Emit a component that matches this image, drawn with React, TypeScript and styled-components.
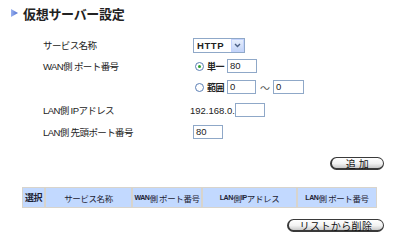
import React from 'react';
import styled, { createGlobalStyle } from 'styled-components';

const GlobalStyle = createGlobalStyle`
    html, body {
        margin: 0;
        padding: 0;
        background: #ffffff;
    }
    body {
        font-family: 'Liberation Sans', 'Noto Sans CJK JP', sans-serif;
        color: #222222;
    }
`;

const Page = styled.div`
    width: 400px;
    height: 249px;
    overflow: hidden;
    display: flex;
    flex-direction: column;
`;

const Title = styled.div`
    height: 26px;
    padding-left: 11px;
    display: flex;
    align-items: center;
    gap: 5px;
    font-family: 'Noto Sans CJK JP', sans-serif;
    font-weight: 700;
    font-size: 13px;
    letter-spacing: -0.3px;
    color: #222;
`;

const Form = styled.div`
    margin-top: 8px;
    padding-left: 43px;
    display: flex;
    flex-direction: column;
`;

const Row = styled.div<{ $h: number }>`
    height: ${({ $h }) => $h}px;
    display: grid;
    grid-template-columns: 147px 1fr;
    align-items: center;
`;

const Label = styled.span`
    font-family: 'Liberation Sans', 'Noto Sans CJK JP', sans-serif;
    font-size: 9.5px;
    letter-spacing: -0.6px;
    white-space: nowrap;
`;

const Value = styled.div<{ $indent?: number }>`
    display: flex;
    align-items: center;
    padding-left: ${({ $indent }) => $indent ?? 0}px;
    font-size: 9.5px;
    white-space: nowrap;
`;

const Input = styled.div<{ $w: number }>`
    width: ${({ $w }) => $w}px;
    height: 14px;
    box-sizing: border-box;
    border: 1px solid #8fa8c8;
    background: #fff;
    font-size: 9.5px;
    line-height: 12px;
    padding-left: 2px;
`;

const Select = styled.div`
    width: 52px;
    height: 15px;
    margin-left: 3px;
    box-sizing: border-box;
    border: 1px solid #8fa8c8;
    background: #fff;
    display: flex;
    align-items: center;
    justify-content: space-between;
    font-size: 9.5px;
    font-weight: 700;
    letter-spacing: 0.6px;
    padding-left: 3px;
`;

const SelectArrow = styled.div`
    width: 13px;
    height: 13px;
    box-sizing: border-box;
    border: 1px solid #c3d3fd;
    background: linear-gradient(#e6eefc, #c4d5f7);
    display: flex;
    align-items: center;
    justify-content: center;
`;

const Radio = styled.span<{ $checked?: boolean }>`
    width: 9px;
    height: 9px;
    box-sizing: border-box;
    border: 1px solid #5b7fb5;
    border-radius: 50%;
    background: #fff;
    margin: 0 3px 0 5px;
    display: inline-flex;
    align-items: center;
    justify-content: center;
    &::after {
        content: '';
        width: 3px;
        height: 3px;
        border-radius: 50%;
        background: ${({ $checked }) => ($checked ? '#2ea12e' : 'transparent')};
    }
`;

const RadioText = styled.span`
    font-family: 'Noto Sans CJK JP', sans-serif;
    font-size: 9px;
    font-weight: 700;
    letter-spacing: -0.5px;
    margin-right: 3px;
`;

const Tilde = styled.span`
    margin: 0 3px 0 4px;
    font-size: 10px;
    color: #555;
`;

const ButtonRow = styled.div<{ $mt: number }>`
    margin-top: ${({ $mt }) => $mt}px;
    display: flex;
    justify-content: flex-end;
    padding-right: 16px;
`;

const PillButton = styled.div<{ $w: number }>`
    width: ${({ $w }) => $w}px;
    height: 13px;
    box-sizing: border-box;
    border: 1px solid #3a3a3a;
    border-left-width: 2px;
    border-bottom-width: 2px;
    border-radius: 7px;
    background: linear-gradient(#ffffff 0%, #f2f2f2 55%, #c9c9c9 100%);
    display: flex;
    align-items: center;
    justify-content: center;
    font-family: 'Noto Sans CJK JP', sans-serif;
    font-size: 10px;
    letter-spacing: 0.4px;
    color: #111;
`;

const Table = styled.div`
    margin: 17px 0 0 22px;
    width: 355px;
    height: 21px;
    box-sizing: border-box;
    padding: 1px;
    display: grid;
    grid-template-columns: 21px 85px 68px 93px 78px;
    gap: 2px;
    background: #d8d4cc;
`;

const HeadCell = styled.div<{ $strong?: boolean }>`
    background: #c2d9ff;
    display: flex;
    align-items: center;
    justify-content: center;
    font-family: 'Noto Sans CJK JP', sans-serif;
    font-size: ${({ $strong }) => ($strong ? 9 : 8.5)}px;
    font-weight: ${({ $strong }) => ($strong ? 700 : 400)};
    letter-spacing: -0.4px;
    color: #1c2233;
    white-space: nowrap;
`;

const Small = styled.span`
    font-size: 7px;
    font-family: 'Liberation Sans', sans-serif;
    font-weight: 700;
`;

const Bullet = () => (
    <svg width="7" height="8" viewBox="0 0 7 8">
        <defs>
            <linearGradient id="bl" x1="0" y1="0" x2="1" y2="0">
                <stop offset="0" stopColor="#9ab2f0" />
                <stop offset="1" stopColor="#4f6fcf" />
            </linearGradient>
        </defs>
        <polygon points="0,0 7,4 0,8" fill="url(#bl)" />
    </svg>
);

const Chevron = () => (
    <svg width="7" height="5" viewBox="0 0 7 5">
        <polyline points="1,1 3.5,3.5 6,1" fill="none" stroke="#4d6185" strokeWidth="1.4" />
    </svg>
);

export default function App() {
    return (
        <Page>
            <GlobalStyle />
            <Title>
                <Bullet />
                仮想サーバー設定
            </Title>
            <Form>
                <Row $h={22}>
                    <Label>サービス名称</Label>
                    <Value>
                        <Select>
                            HTTP
                            <SelectArrow>
                                <Chevron />
                            </SelectArrow>
                        </Select>
                    </Value>
                </Row>
                <Row $h={20}>
                    <Label>WAN側 ポート番号</Label>
                    <Value>
                        <Radio $checked />
                        <RadioText>単一</RadioText>
                        <Input $w={30}>80</Input>
                    </Value>
                </Row>
                <Row $h={22}>
                    <span />
                    <Value>
                        <Radio />
                        <RadioText>範囲</RadioText>
                        <Input $w={29}>0</Input>
                        <Tilde>～</Tilde>
                        <Input $w={31}>0</Input>
                    </Value>
                </Row>
                <Row $h={24}>
                    <Label>LAN側 IPアドレス</Label>
                    <Value>
                        192.168.0.
                        <Input $w={30} />
                    </Value>
                </Row>
                <Row $h={19}>
                    <Label>LAN側 先頭ポート番号</Label>
                    <Value $indent={3}>
                        <Input $w={30}>80</Input>
                    </Value>
                </Row>
            </Form>
            <ButtonRow $mt={16}>
                <PillButton $w={54}>追&nbsp;加</PillButton>
            </ButtonRow>
            <Table>
                <HeadCell $strong>選択</HeadCell>
                <HeadCell>サービス名称</HeadCell>
                <HeadCell>
                    <Small>WAN</Small>側 ポート番号
                </HeadCell>
                <HeadCell>
                    <Small>LAN</Small>側 <Small>IP</Small>アドレス
                </HeadCell>
                <HeadCell>
                    <Small>LAN</Small>側 ポート番号
                </HeadCell>
            </Table>
            <ButtonRow $mt={11}>
                <PillButton $w={97}>リストから削除</PillButton>
            </ButtonRow>
        </Page>
    );
}
